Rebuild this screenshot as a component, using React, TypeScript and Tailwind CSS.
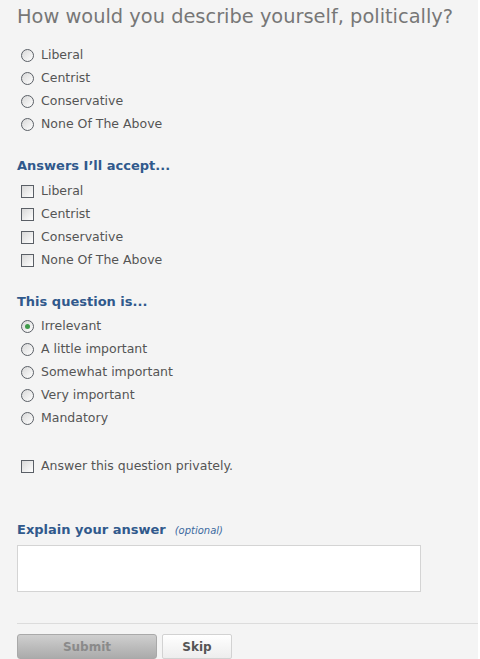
import React from "react";

const font = { fontFamily: '"DejaVu Sans", Verdana, sans-serif' };

const Radio = ({ checked }: { checked?: boolean }) => (
  <span className="flex items-center justify-center w-[13px] h-[13px] rounded-full border border-[#5a5f66] bg-gradient-to-br from-[#d8d8d8] to-white shrink-0">
    {checked && <span className="w-[5px] h-[5px] rounded-full bg-[#3f9a4a]" />}
  </span>
);

const Check = () => (
  <span className="w-[13px] h-[13px] border border-[#5a5f66] bg-gradient-to-br from-[#d8d8d8] to-white shrink-0" />
);

const Row = ({ label, kind, checked }: { label: string; kind: "radio" | "check"; checked?: boolean }) => (
  <label className="flex items-center h-[23px] pl-[21px] gap-[7px] text-[12.5px] text-[#555]">
    {kind === "radio" ? <Radio checked={checked} /> : <Check />}
    <span>{label}</span>
  </label>
);

const Heading = ({ children }: { children: React.ReactNode }) => (
  <h3 className="h-[20px] flex items-center pl-[17px] text-[13px] font-bold text-[#30598c]">{children}</h3>
);

export default function App() {
  const answers = ["Liberal", "Centrist", "Conservative", "None Of The Above"];
  const importance = ["Irrelevant", "A little important", "Somewhat important", "Very important", "Mandatory"];

  return (
    <div style={font} className="w-[480px] h-[659px] bg-[#f4f4f4] border-r-2 border-white overflow-hidden">
      <h1 className="pt-[5px] pl-[17px] h-[29px] flex items-center text-[19.4px] text-[#777] leading-none whitespace-nowrap">
        How would you describe yourself, politically?
      </h1>

      <div className="mt-[15px]">
        {answers.map((a) => (
          <Row key={a} label={a} kind="radio" />
        ))}
      </div>

      <div className="mt-[20px]">
        <Heading>Answers I’ll accept...</Heading>
      </div>
      <div className="mt-[4px]">
        {answers.map((a) => (
          <Row key={a} label={a} kind="check" />
        ))}
      </div>

      <div className="mt-[20px]">
        <Heading>This question is...</Heading>
      </div>
      <div className="mt-[3px]">
        {importance.map((a, i) => (
          <Row key={a} label={a} kind="radio" checked={i === 0} />
        ))}
      </div>

      <div className="mt-[25px]">
        <Row label="Answer this question privately." kind="check" />
      </div>

      <div className="mt-[42px] flex items-center h-[20px] pl-[17px] gap-[9px]">
        <span className="text-[13px] font-bold text-[#30598c]">Explain your answer</span>
        <span className="text-[10px] italic text-[#3c6aa0]">(optional)</span>
      </div>

      <div className="mt-[5px] ml-[17px] w-[404px] h-[47px] bg-white border border-[#d4d4d4]" />

      <div className="mt-[31px] ml-[17px] border-t border-[#dcdcdc]" />

      <div className="mt-[10px] ml-[17px] flex gap-[5px]">
        <button className="w-[140px] h-[25px] rounded-[3px] border border-[#a9a9a9] bg-gradient-to-b from-[#cfcfcf] to-[#ababab] text-[12px] font-bold text-[#8a8a8a]">
          Submit
        </button>
        <button className="w-[70px] h-[25px] rounded-[2px] border border-[#d2d2d2] bg-gradient-to-b from-white to-[#ededed] text-[12px] font-bold text-[#555]">
          Skip
        </button>
      </div>
    </div>
  );
}
